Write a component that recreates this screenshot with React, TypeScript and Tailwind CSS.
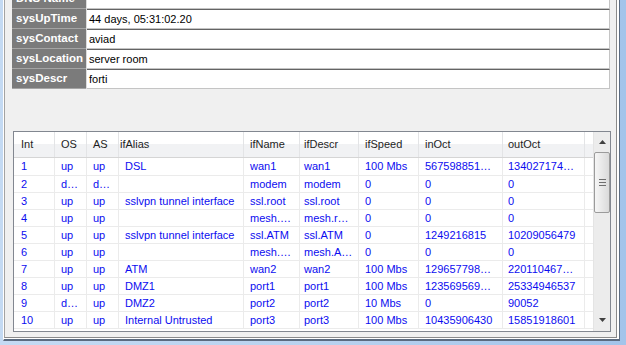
import React from "react";

const props = [
  { k: "DNS Name", v: "" },
  { k: "sysUpTime", v: "44 days, 05:31:02.20" },
  { k: "sysContact", v: "aviad" },
  { k: "sysLocation", v: "server room" },
  { k: "sysDescr", v: "forti" },
];

const cols = [
  { name: "Int", w: "w-[41px]", pl: "pl-[7px]", hpl: "pl-[7px]" },
  { name: "OS", w: "w-[32px]", pl: "pl-[6px]", hpl: "pl-[6px]" },
  { name: "AS", w: "w-[32px]", pl: "pl-[6px]", hpl: "pl-[6px]" },
  { name: "ifAlias", w: "w-[125px]", pl: "pl-[6px]", hpl: "pl-[1px]" },
  { name: "ifName", w: "w-[56px]", pl: "pl-[6px]", hpl: "pl-[6px]" },
  { name: "ifDescr", w: "w-[59px]", pl: "pl-[4px]", hpl: "pl-[4px]" },
  { name: "ifSpeed", w: "w-[60px]", pl: "pl-[6px]", hpl: "pl-[6px]" },
  { name: "inOct", w: "w-[84px]", pl: "pl-[6px]", hpl: "pl-[6px]" },
  { name: "outOct", w: "w-[82px]", pl: "pl-[5px]", hpl: "pl-[5px]" },
];

const rows = [
  ["1", "up", "up", "DSL", "wan1", "wan1", "100 Mbs", "567598851…", "134027174…"],
  ["2", "d…", "d…", "", "modem", "modem", "0", "0", "0"],
  ["3", "up", "up", "sslvpn tunnel interface", "ssl.root", "ssl.root", "0", "0", "0"],
  ["4", "up", "up", "", "mesh.…", "mesh.r…", "0", "0", "0"],
  ["5", "up", "up", "sslvpn tunnel interface", "ssl.ATM", "ssl.ATM", "0", "1249216815", "10209056479"],
  ["6", "up", "up", "", "mesh.…", "mesh.A…", "0", "0", "0"],
  ["7", "up", "up", "ATM", "wan2", "wan2", "100 Mbs", "129657798…", "220110467…"],
  ["8", "up", "up", "DMZ1", "port1", "port1", "100 Mbs", "123569569…", "25334946537"],
  ["9", "d…", "up", "DMZ2", "port2", "port2", "10 Mbs", "0", "90052"],
  ["10", "up", "up", "Internal Untrusted", "port3", "port3", "100 Mbs", "10435906430", "15851918601"],
];

function Arrow({ down }: { down?: boolean }) {
  return (
    <svg width="7" height="4" viewBox="0 0 7 4">
      <path d={down ? "M0 0 L7 0 L3.5 4 Z" : "M0 4 L3.5 0 L7 4 Z"} fill="#404040" />
    </svg>
  );
}

function ScrollBar() {
  return (
    <div className="w-[17px] h-full flex flex-col bg-[#ececec] border-l border-[#e4e4e4]">
      <div className="h-[17px] flex items-center justify-center pt-[3px]">
        <Arrow />
      </div>
      <div className="mt-[3px] h-[61px] mx-[0px] rounded-[2px] border border-[#9b9b9b] bg-gradient-to-r from-[#f6f6f6] to-[#dadada] flex flex-col items-center justify-center gap-[2px]">
        <div className="w-[7px] h-[1px] bg-[#6e6e6e]" />
        <div className="w-[7px] h-[1px] bg-[#6e6e6e]" />
        <div className="w-[7px] h-[1px] bg-[#6e6e6e]" />
      </div>
      <div className="flex-1" />
      <div className="h-[17px] flex items-center justify-center pb-[5px]">
        <Arrow down />
      </div>
    </div>
  );
}

export default function App() {
  return (
    <div className="w-[626px] h-[345px] overflow-hidden bg-gradient-to-r from-[#c4daf3] via-[#b9d2ef] to-[#a3c4ea] font-['Liberation_Sans',Arial,sans-serif] text-[11px]">
      <div className="ml-[3px] w-[617px] h-[341px] bg-white border-l border-l-white border-r border-r-[#5b6b80] border-b-2 border-b-[#5b6b80]">
        <div className="mr-[2px] h-[338px] bg-[#f0f0f0] border-l border-l-[#a3a3a3] border-r border-r-[#8a8a8a] border-b border-b-[#8a8a8a] overflow-hidden flex flex-col">
          {/* property grid */}
          <div className="ml-[7px] mr-[6px] -mt-[11px] flex flex-col">
            {props.map((p) => (
              <div key={p.k} className="flex h-[20px]">
                <div className="w-[74px] bg-[#7b7b7b] border-b border-[#a4a4a4] pl-[4px] flex items-center text-white font-bold text-[11.5px]">
                  {p.k}
                </div>
                <div className="w-[1px] bg-[#dcdcdc]" />
                <div className="flex-1 bg-white border-t border-t-[#646464] border-b border-b-[#c4c4c4] border-r border-r-[#c4c4c4] pl-[2px] flex items-center text-black">
                  {p.v}
                </div>
              </div>
            ))}
          </div>

          {/* interface list */}
          <div className="mt-[42px] ml-[8px] mr-[5px] h-[201px] border border-[#828790] bg-white flex">
            <div className="flex-1 flex flex-col">
              <div className="h-[26px] flex border-b border-[#d5d5d5] bg-gradient-to-b from-white from-50% to-[#f1f2f4] to-50%">
                {cols.map((c) => (
                  <div key={c.name} className={`${c.w} ${c.hpl} shrink-0 border-r border-[#e3e4e6] flex items-center text-[#1e1e1e]`}>
                    {c.name}
                  </div>
                ))}
                <div className="flex-1" />
              </div>
              {rows.map((r, i) => (
                <div key={i} className={`${i === 0 ? "h-[18px]" : "h-[17px]"} flex border-b border-[#ebebeb] text-[#0c0cf0]`}>
                  {cols.map((c, j) => (
                    <div key={c.name} className={`${c.w} ${c.pl} shrink-0 border-r border-[#ebebeb] flex items-center whitespace-nowrap overflow-hidden`}>
                      {r[j]}
                    </div>
                  ))}
                  <div className="flex-1" />
                </div>
              ))}
            </div>
            <ScrollBar />
          </div>
        </div>
      </div>
    </div>
  );
}
